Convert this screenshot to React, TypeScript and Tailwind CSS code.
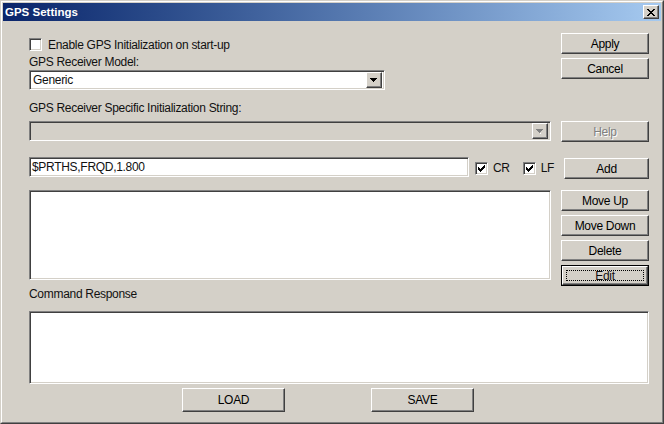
const raised =
  'flex items-center justify-center border border-t-white border-l-white border-r-[#404040] border-b-[#404040] bg-[#d4d0c8] shadow-[inset_-1px_-1px_#808080]';
const sunken =
  'border border-t-[#808080] border-l-[#808080] border-r-white border-b-white shadow-[inset_1px_1px_#404040,inset_-1px_-1px_#d4d0c8]';

function CheckBox({ checked }: { checked?: boolean }) {
  const cols = [2, 3, 4, 3, 2, 1, 0];
  return (
    <span className={`flex h-[13px] w-[13px] shrink-0 items-center justify-center bg-white ${sunken}`}>
      {checked && (
        <svg width="7" height="7" viewBox="0 0 7 7" shapeRendering="crispEdges">
          {cols.map((y, x) => (
            <rect key={x} x={x} y={y} width="1" height="3" fill="#000" />
          ))}
        </svg>
      )}
    </span>
  );
}

function Arrow({ color = '#000', shadow }: { color?: string; shadow?: boolean }) {
  return (
    <svg width="8" height="5" viewBox="0 0 8 5" shapeRendering="crispEdges">
      {shadow && <rect x="4" y="4" width="1" height="1" fill="#fff" />}
      <rect x="0" y="0" width="7" height="1" fill={color} />
      <rect x="1" y="1" width="5" height="1" fill={color} />
      <rect x="2" y="2" width="3" height="1" fill={color} />
      <rect x="3" y="3" width="1" height="1" fill={color} />
    </svg>
  );
}

function CloseGlyph() {
  const rows = [
    [0, 1, 6, 7],
    [1, 2, 5, 6],
    [2, 3, 4, 5],
    [3, 4],
    [2, 3, 4, 5],
    [1, 2, 5, 6],
    [0, 1, 6, 7],
  ];
  return (
    <svg width="8" height="7" viewBox="0 0 8 7" shapeRendering="crispEdges">
      {rows.map((r, y) => r.map((x) => <rect key={`${x}-${y}`} x={x} y={y} width="1" height="1" fill="#000" />))}
    </svg>
  );
}

function Button({ label, disabled, className = '' }: { label: string; disabled?: boolean; className?: string }) {
  return (
    <div className={`${raised} ${className}`}>
      <span className={disabled ? 'text-[#808080] [text-shadow:1px_1px_#fff]' : 'text-black'}>{label}</span>
    </div>
  );
}

export default function App() {
  return (
    <div className="h-[424px] w-[664px] border border-t-[#d4d0c8] border-l-[#d4d0c8] border-r-[#404040] border-b-[#404040] font-['Liberation_Sans',Arial,sans-serif] text-[12px] leading-[14px] tracking-[-0.3px] text-[#111]">
      <div className="flex h-full flex-col border border-t-white border-l-white border-r-[#808080] border-b-[#808080] bg-[#d4d0c8] p-px">
        {/* title bar */}
        <div className="flex h-[18px] shrink-0 items-center justify-between bg-gradient-to-r from-[#0a246a] to-[#a6caf0] pl-[2px] pr-[2px]">
          <span className="text-[11.5px] font-bold tracking-normal text-white">GPS Settings</span>
          <div className={`${raised} h-[14px] w-[16px]`}>
            <CloseGlyph />
          </div>
        </div>

        <div className="flex flex-col pl-[26px] pr-[12px]">
          {/* top row */}
          <div className="mt-[12px] flex gap-[10px]">
            <div className="flex flex-1 flex-col">
              <div className="mt-[5px] flex h-[13px] items-center gap-[6px]">
                <CheckBox />
                <span>Enable GPS Initialization on start-up</span>
              </div>
              <div className="mt-[4px] h-[14px]">GPS Receiver Model:</div>
              <div className={`mt-px flex h-[20px] w-[356px] items-center justify-between bg-white pl-[3px] pr-[2px] ${sunken}`}>
                <span>Generic</span>
                <div className={`${raised} h-[16px] w-[16px]`}>
                  <Arrow />
                </div>
              </div>
            </div>
            <div className="flex w-[88px] flex-col gap-[4px]">
              <Button label="Apply" className="h-[21px]" />
              <Button label="Cancel" className="h-[21px]" />
            </div>
          </div>

          <div className="mt-[11px] h-[14px]">GPS Receiver Specific Initialization String:</div>

          <div className="mt-[6px] flex gap-[10px]">
            <div className={`flex h-[20px] flex-1 items-center justify-end bg-[#d4d0c8] pr-[2px] ${sunken}`}>
              <div className={`${raised} h-[16px] w-[16px]`}>
                <Arrow color="#808080" shadow />
              </div>
            </div>
            <Button label="Help" disabled className="h-[21px] w-[88px]" />
          </div>

          <div className="mt-[15px] flex gap-[10px]">
            <div className="flex flex-1 items-start">
              <div className={`flex h-[20px] w-[440px] items-center bg-white pl-[2px] ${sunken}`}>
                <span>$PRTHS,FRQD,1.800</span>
              </div>
              <div className="ml-[6px] mt-[4px] flex items-center gap-[5px]">
                <CheckBox checked />
                <span>CR</span>
              </div>
              <div className="ml-[13px] mt-[4px] flex items-center gap-[5px]">
                <CheckBox checked />
                <span>LF</span>
              </div>
            </div>
            <Button label="Add" className="mt-px h-[21px] w-[88px]" />
          </div>

          <div className="mt-[11px] flex gap-[10px]">
            <div className={`h-[90px] flex-1 bg-white ${sunken}`} />
            <div className="flex w-[88px] flex-col gap-[4px]">
              <Button label="Move Up" className="h-[21px]" />
              <Button label="Move Down" className="h-[21px]" />
              <Button label="Delete" className="h-[21px]" />
              <div className="h-[21px] border border-black">
                <div className={`${raised} relative h-full`}>
                  <div className="absolute inset-[3px] border border-dotted border-black" />
                  <span>Edit</span>
                </div>
              </div>
            </div>
          </div>

          <div className="mt-px h-[14px]">Command Response</div>

          <div className={`mt-[10px] h-[73px] w-full bg-white ${sunken}`} />

          <div className="mt-[4px] flex gap-[86px] pl-[153px]">
            <Button label="LOAD" className="h-[24px] w-[103px]" />
            <Button label="SAVE" className="h-[24px] w-[103px]" />
          </div>
        </div>
      </div>
    </div>
  );
}
